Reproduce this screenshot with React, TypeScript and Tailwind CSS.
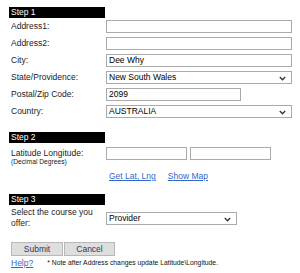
import React from "react";

const Chevron = () => (
  <svg width="7" height="5" viewBox="0 0 7 5" className="absolute right-[5px] top-[4px]">
    <path d="M0.8 1 L3.5 3.8 L6.2 1" fill="none" stroke="#333" strokeWidth="1.3" />
  </svg>
);

const Header = ({ children }: { children: React.ReactNode }) => (
  <div className="w-[96px] h-[11px] bg-black text-white text-[8.5px] leading-[11px] pl-[2px]">{children}</div>
);

const Input = ({ w, value = "" }: { w: string; value?: string }) => (
  <div className={`${w} h-[13px] border border-[#aaaaaa] bg-white text-[8.5px] leading-[11px] pl-[2px] text-black`}>{value}</div>
);

const Select = ({ w, value }: { w: string; value: string }) => (
  <div className={`${w} relative h-[13px] border border-[#aaaaaa] bg-white text-[8.5px] leading-[11px] pl-[2px] text-black`}>
    {value}
    <Chevron />
  </div>
);

const Row = ({ label, children }: { label: string; children: React.ReactNode }) => (
  <div className="flex items-center h-[13px] mt-[4px]">
    <div className="w-[97px] pl-[2px] text-[8.5px] leading-[11px] text-[#222]">{label}</div>
    {children}
  </div>
);

export default function App() {
  return (
    <div className="w-[300px] h-[273px] bg-white pl-[9px] pt-[7px] overflow-hidden" style={{ fontFamily: '"Liberation Sans", Arial, sans-serif' }}>
      <Header>Step 1</Header>
      <div className="-mt-[2px]">
        <Row label="Address1:"><Input w="w-[186px]" /></Row>
        <Row label="Address2:"><Input w="w-[186px]" /></Row>
        <Row label="City:"><Input w="w-[186px]" value="Dee Why" /></Row>
        <Row label="State/Providence:"><Select w="w-[186px]" value="New South Wales" /></Row>
        <Row label="Postal/Zip Code:"><Input w="w-[135px]" value="2099" /></Row>
        <Row label="Country:"><Select w="w-[186px]" value="AUSTRALIA" /></Row>
      </div>
      <div className="mt-[14px]"><Header>Step 2</Header></div>
      <div className="flex mt-[4px]">
        <div className="w-[97px] pl-[2px] pt-[1px]">
          <div className="text-[8.5px] leading-[10px] text-[#222]">Latitude Longitude:</div>
          <div className="text-[6.7px] leading-[8px] text-[#222]">(Decimal Degrees)</div>
        </div>
        <div className="flex gap-[3px]">
          <Input w="w-[81px]" />
          <Input w="w-[81px]" />
        </div>
      </div>
      <div className="flex gap-[12px] ml-[100px] mt-[5px] text-[8.5px] leading-[10px]">
        <span className="text-[#3366cc] underline">Get Lat, Lng</span>
        <span className="text-[#3366cc] underline">Show Map</span>
      </div>
      <div className="mt-[13px]"><Header>Step 3</Header></div>
      <div className="flex items-start mt-[2px]">
        <div className="w-[97px] pl-[2px] text-[8.5px] leading-[11px] text-[#222]">Select the course you offer:</div>
        <div className="pt-[5px]"><Select w="w-[131px]" value="Provider" /></div>
      </div>
      <div className="flex gap-[1px] ml-[2px] mt-[13px]">
        <div className="w-[52px] h-[14px] bg-[#dedede] border border-[#b8b8b8] text-[8.5px] leading-[12px] text-center text-[#2b3a67]">Submit</div>
        <div className="w-[51px] h-[14px] bg-[#dedede] border border-[#b8b8b8] text-[8.5px] leading-[12px] text-center text-[#2b3a67]">Cancel</div>
      </div>
      <div className="flex items-center ml-[2px] mt-[2px] h-[10px]">
        <span className="text-[8.5px] leading-[10px] text-[#3366cc] underline">Help?</span>
        <span className="ml-[14px] text-[6.8px] leading-[10px] text-[#111] whitespace-nowrap">* Note after Address changes update Latitude\Longitude.</span>
      </div>
    </div>
  );
}
